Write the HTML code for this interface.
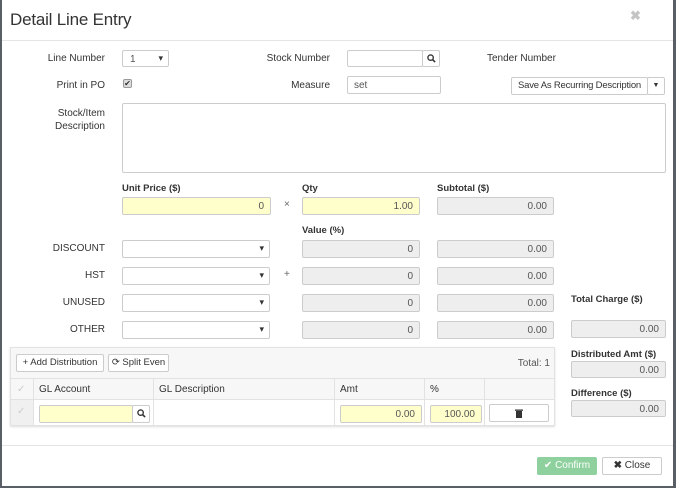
<!DOCTYPE html>
<html><head><meta charset="utf-8"><style>
*{box-sizing:border-box;margin:0;padding:0;white-space:nowrap}
body{width:676px;height:488px;background:#5a5f66;font-family:"Liberation Sans",sans-serif;font-size:10px;color:#333;position:relative;overflow:hidden}
#m{position:absolute;left:2px;top:0;width:671px;height:486px;background:#fff}
.a{position:absolute}
.lbl{position:absolute;text-align:right;width:100px;font-size:10px;color:#333}
.b{font-weight:bold;position:absolute;font-size:9.5px;color:#333}
.in{position:absolute;border:1px solid #ccc;border-radius:2px;background:#fff;height:18px;font-size:10px;line-height:17px;padding:0 6px;text-align:right;color:#555}
.y{background:#ffffcc}
.g{background:#eee}
.sel{position:absolute;border:1px solid #ccc;border-radius:2px;background:#fff;height:18px}
.sel:after{content:"▾";position:absolute;right:5px;top:2px;font-size:9px;color:#333}
.btn{position:absolute;border:1px solid #ccc;border-radius:2px;background:#fff;height:18px;font-size:10px;line-height:16px;text-align:center;color:#333}
</style></head><body>
<div id="m">
<div class="a" style="left:8px;top:10px;font-size:17px;color:#333;letter-spacing:-0.2px">Detail Line Entry</div>
<div class="a" style="left:628px;top:8px;font-size:13px;color:#c4c4c4;font-weight:bold">✖</div>
<div class="a" style="left:0;top:40px;width:671px;height:1px;background:#e5e5e5"></div>

<div class="lbl" style="left:3px;top:53px">Line Number</div>
<div class="sel" style="left:120px;top:50px;width:47px;height:17px"><span class="a" style="left:7px;top:3px;color:#555">1</span></div>
<div class="lbl" style="left:228px;top:53px">Stock Number</div>
<div class="in" style="left:345px;top:50px;width:76px;height:17px"></div>
<div class="btn" style="left:420px;top:50px;width:18px;height:17px"><svg width="9" height="9" viewBox="0 0 10 10" style="margin-top:3px"><circle cx="4" cy="4" r="3" fill="none" stroke="#333" stroke-width="1.5"/><path d="M6 6L9 9" stroke="#333" stroke-width="1.8"/></svg></div>
<div class="a" style="left:485px;top:53px;font-size:10px">Tender Number</div>

<div class="lbl" style="left:3px;top:80px">Print in PO</div>
<div class="a" style="left:121px;top:79px;width:9px;height:9px;border:1px solid #999;border-radius:2px;background:#ddd;font-size:8px;line-height:7px;text-align:center">✔</div>
<div class="lbl" style="left:228px;top:80px">Measure</div>
<div class="in" style="left:345px;top:76px;width:94px;text-align:left;height:18px">set</div>
<div class="btn" style="left:509px;top:77px;width:137px;font-size:9.5px;letter-spacing:-0.2px">Save As Recurring Description</div>
<div class="btn" style="left:645px;top:77px;width:18px;font-size:7px">▼</div>

<div class="lbl" style="left:3px;top:107px;line-height:13px">Stock/Item<br>Description</div>
<div class="in" style="left:120px;top:103px;width:544px;height:70px"></div>

<div class="b" style="left:120px;top:183px">Unit Price ($)</div>
<div class="in y" style="left:120px;top:197px;width:149px">0</div>
<div class="a" style="left:282px;top:199px;color:#666">×</div>
<div class="b" style="left:300px;top:183px">Qty</div>
<div class="in y" style="left:300px;top:197px;width:118px">1.00</div>
<div class="b" style="left:435px;top:183px">Subtotal ($)</div>
<div class="in g" style="left:435px;top:197px;width:117px">0.00</div>
<div class="b" style="left:300px;top:225px">Value (%)</div>

<div class="lbl" style="left:3px;top:243px">DISCOUNT</div>
<div class="sel" style="left:120px;top:240px;width:148px"></div>
<div class="in g" style="left:300px;top:240px;width:118px">0</div>
<div class="in g" style="left:435px;top:240px;width:117px">0.00</div>
<div class="lbl" style="left:3px;top:270px">HST</div>
<div class="sel" style="left:120px;top:267px;width:148px"></div>
<div class="a" style="left:282px;top:269px;color:#666">+</div>
<div class="in g" style="left:300px;top:267px;width:118px">0</div>
<div class="in g" style="left:435px;top:267px;width:117px">0.00</div>
<div class="lbl" style="left:3px;top:297px">UNUSED</div>
<div class="sel" style="left:120px;top:294px;width:148px"></div>
<div class="in g" style="left:300px;top:294px;width:118px">0</div>
<div class="in g" style="left:435px;top:294px;width:117px">0.00</div>
<div class="lbl" style="left:3px;top:324px">OTHER</div>
<div class="sel" style="left:120px;top:321px;width:148px"></div>
<div class="in g" style="left:300px;top:321px;width:118px">0</div>
<div class="in g" style="left:435px;top:321px;width:117px">0.00</div>

<div class="b" style="left:569px;top:294px">Total Charge ($)</div>
<div class="in g" style="left:569px;top:320px;width:95px">0.00</div>
<div class="b" style="left:569px;top:349px">Distributed Amt ($)</div>
<div class="in g" style="left:569px;top:361px;width:95px;height:17px">0.00</div>
<div class="b" style="left:569px;top:388px">Difference ($)</div>
<div class="in g" style="left:569px;top:400px;width:95px;height:17px">0.00</div>

<div class="a" style="left:8px;top:347px;width:545px;height:79px;border:1px solid #e2e2e2;background:#f7f7f7;box-shadow:0 1px 2px #ddd">
 <div class="btn" style="left:5px;top:6px;width:88px;height:18px;font-size:9.5px">+ Add Distribution</div>
 <div class="btn" style="left:97px;top:6px;width:61px;height:18px;font-size:9.5px">⟳ Split Even</div>
 <div class="a" style="right:4px;top:10px;color:#555">Total: 1</div>
 <div class="a" style="left:0;top:30px;width:543px;height:22px;background:#f7f7f7;border-top:1px solid #e2e2e2;border-bottom:1px solid #e2e2e2"></div>
 <div class="a" style="left:0;top:52px;width:543px;height:25px;background:#fff"></div>
 <div class="a" style="left:0;top:52px;width:22px;height:25px;background:#f0f0f0"></div>
 <div class="a" style="left:6px;top:36px;color:#ccc">✓</div>
 <div class="a" style="left:6px;top:58px;color:#ccc">✓</div>
 <div class="a" style="left:22px;top:31px;width:1px;height:46px;background:#e2e2e2"></div>
 <div class="a" style="left:142px;top:31px;width:1px;height:46px;background:#e2e2e2"></div>
 <div class="a" style="left:323px;top:31px;width:1px;height:46px;background:#e2e2e2"></div>
 <div class="a" style="left:413px;top:31px;width:1px;height:46px;background:#e2e2e2"></div>
 <div class="a" style="left:473px;top:31px;width:1px;height:46px;background:#e2e2e2"></div>
 <div class="a" style="left:28px;top:36px">GL Account</div>
 <div class="a" style="left:148px;top:36px">GL Description</div>
 <div class="a" style="left:329px;top:36px">Amt</div>
 <div class="a" style="left:419px;top:36px">%</div>
 <div class="in y" style="left:28px;top:57px;width:94px"></div>
 <div class="btn" style="left:121px;top:57px;width:18px"><svg width="9" height="9" viewBox="0 0 10 10" style="margin-top:3px"><circle cx="4" cy="4" r="3" fill="none" stroke="#333" stroke-width="1.5"/><path d="M6 6L9 9" stroke="#333" stroke-width="1.8"/></svg></div>
 <div class="in y" style="left:329px;top:57px;width:82px">0.00</div>
 <div class="in y" style="left:419px;top:57px;width:52px">100.00</div>
 <div class="btn" style="left:478px;top:56px;width:60px;height:18px"><svg width="8" height="9" viewBox="0 0 8 9" style="margin-top:4px"><rect x="0" y="0.5" width="8" height="1.3" fill="#333"/><rect x="1" y="2" width="6" height="7" fill="#333"/></svg></div>
</div>

<div class="a" style="left:0;top:445px;width:671px;height:1px;background:#e5e5e5"></div>
<div class="btn" style="left:535px;top:457px;width:60px;height:18px;background:#8fd19e;border-color:#8fd19e;color:#fff">✔ Confirm</div>
<div class="btn" style="left:600px;top:457px;width:60px;height:18px"><b>✖</b> Close</div>
</div>
</body></html>
